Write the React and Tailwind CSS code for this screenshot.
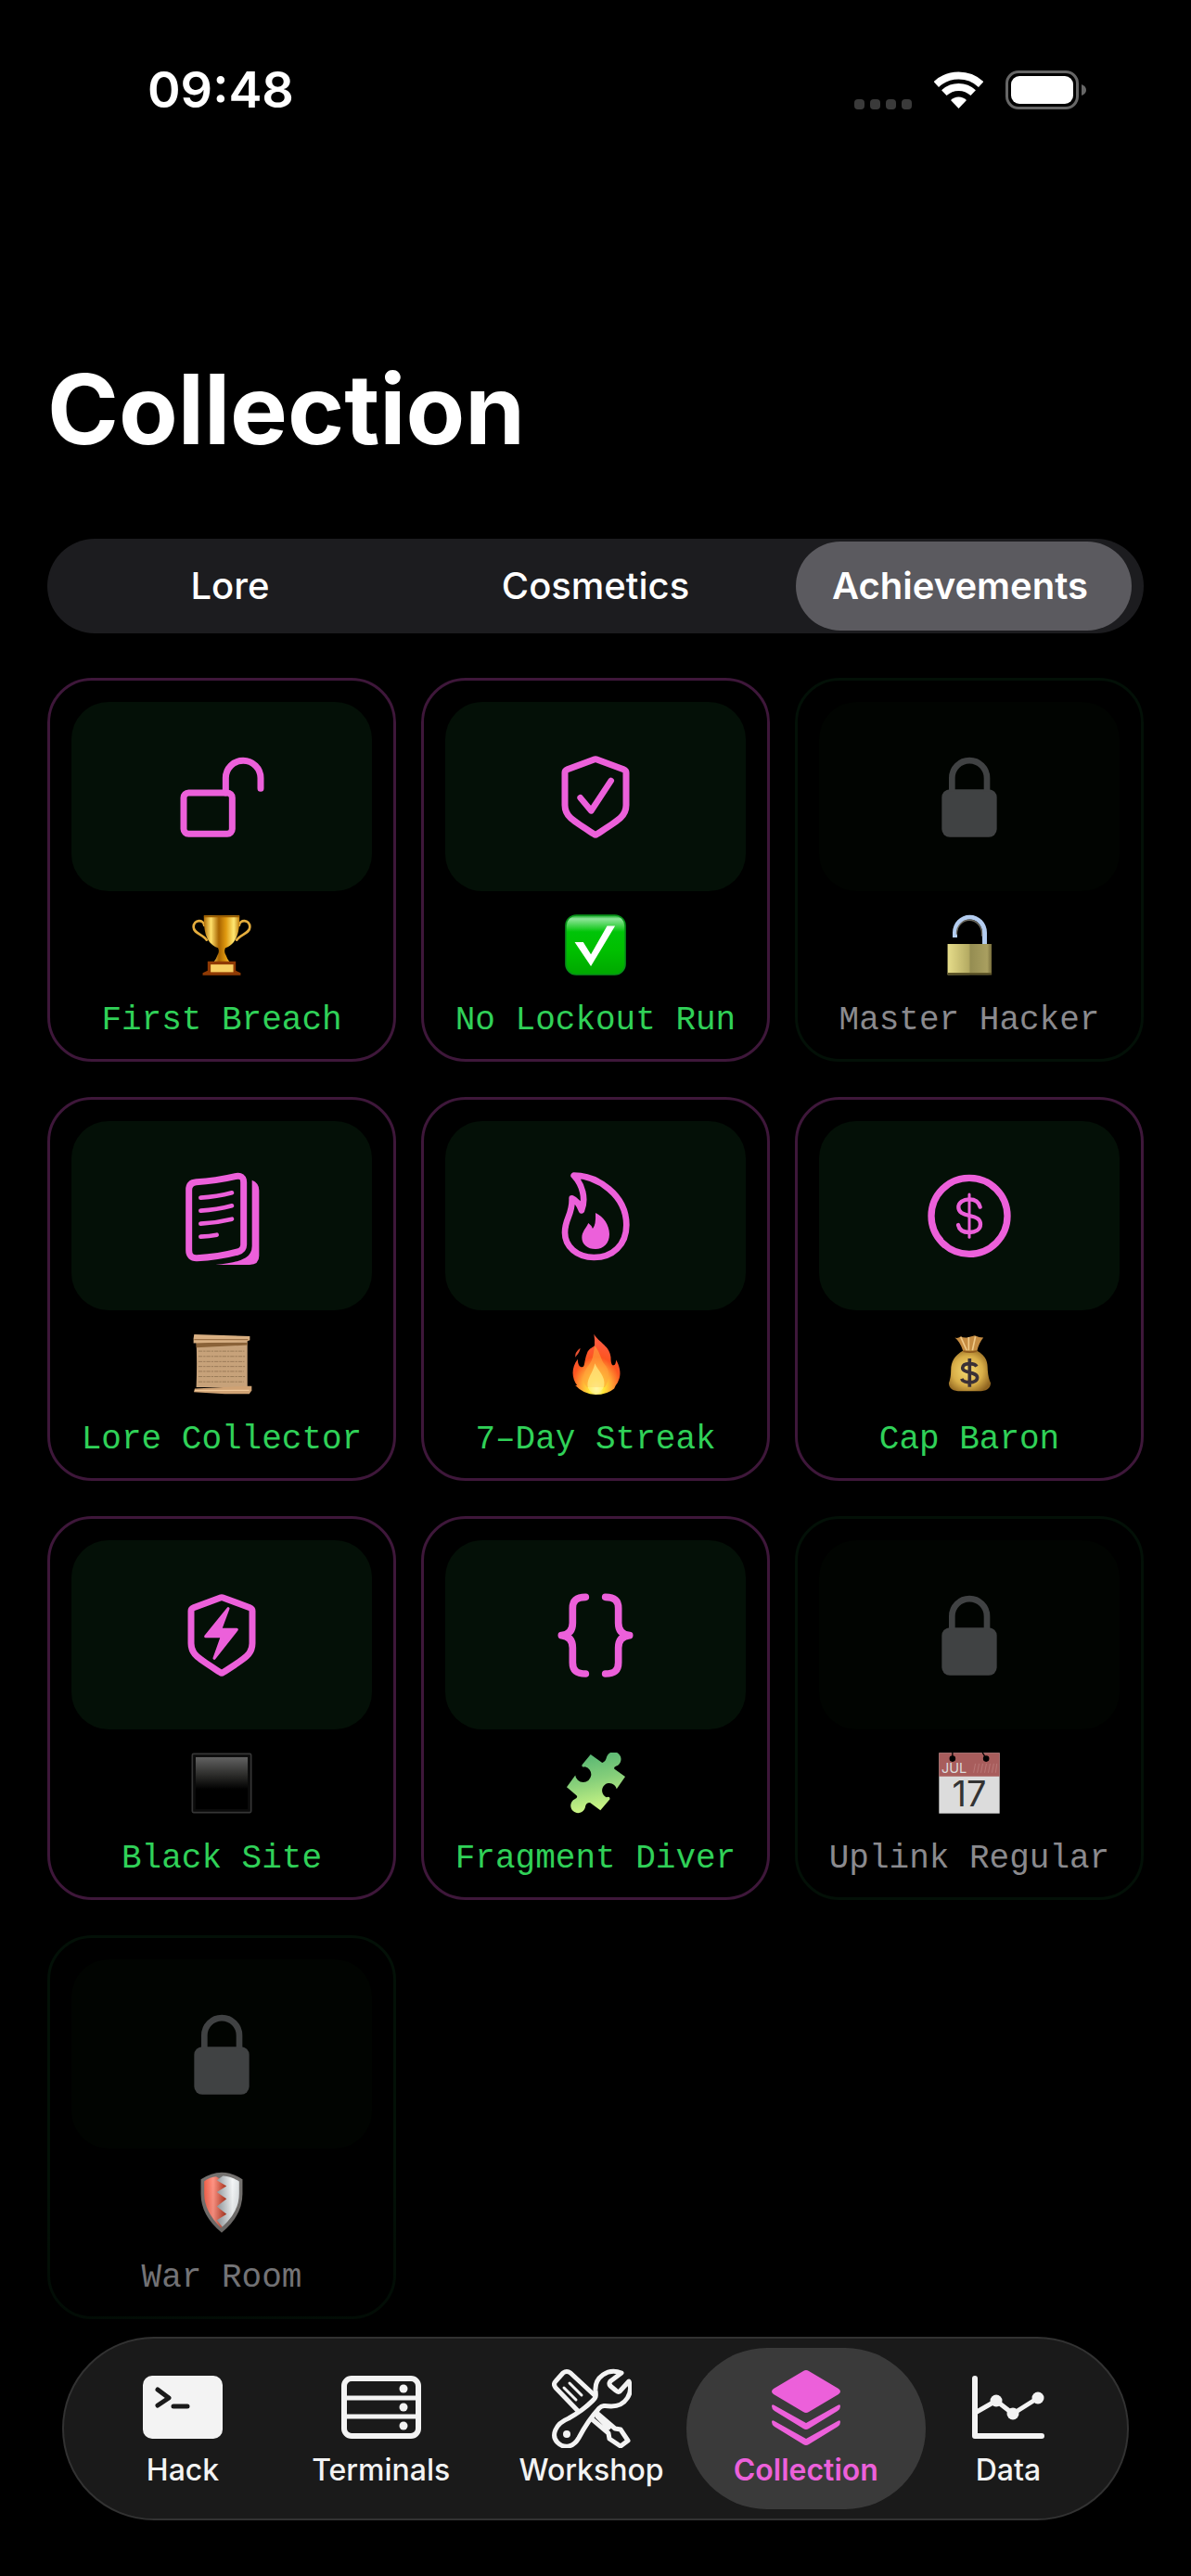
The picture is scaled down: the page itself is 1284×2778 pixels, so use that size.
const PINK_STROKE = { fill: "none", stroke: "currentColor", strokeLinecap: "round", strokeLinejoin: "round" };
const stroke = PINK_STROKE;

const SHIELD =
  "M146 30Q150 28 154 30L241 62Q249 65 249 73V178C249 214 226 226 154 272Q150 275 146 272C74 226 51 214 51 178V73Q51 65 59 62Z";

/* ---------- card icons (300 x 300 grid) ---------- */

const icons = {
  unlocked: (
    <g {...stroke} strokeWidth="21">
      <rect x="27" y="138" width="157" height="133" rx="16" />
      <path d="M163 138V90a56 56 0 0 1 113 0V124" />
    </g>
  ),
  shieldCheck: (
    <g {...stroke} strokeWidth="21">
      <path d={SHIELD} />
      <path d="M101 154L136 196L200 99" strokeWidth="20" />
    </g>
  ),
  locked: (
    <>
      <rect x="61" y="127" width="178" height="154" rx="26" fill="currentColor" />
      <path {...stroke} d="M94 134V90a56 56 0 0 1 113 0V134" strokeWidth="20" strokeLinecap="butt" />
    </>
  ),
  pages: (
    <>
      <path
        {...stroke}
        strokeWidth="21"
        d="M44 66Q44 43 68 41Q130 38 194 23Q221 17 221 42V244Q221 262 202 267Q140 284 70 287Q44 288 44 262Z"
      />
      <path
        {...stroke}
        strokeWidth="14"
        d="M82 92Q134 89 183 76M82 134Q134 131 183 118M82 176Q134 173 183 161M82 218Q110 217 134 212"
      />
      <path d="M248 35Q271 44 271 68V280Q271 309 240 309H130Q200 303 228 286Q248 272 248 248Z" fill="currentColor" />
    </>
  ),
  flame: (
    <>
      <path
        {...stroke}
        strokeWidth="20"
        d="M80 20C155 20 250 82 250 180C250 245 205 285 145 285C90 285 51 250 51 205C51 158 76 148 74 94Q94 102 105 133C120 95 108 50 80 20Z"
      />
      <path
        fill="currentColor"
        d="M150 141C175 152 195 180 195 210C195 240 175 258 150 258C124 258 106 242 106 221C106 203 118 192 127 174Q136 180 141 192Q152 180 150 141Z"
      />
    </>
  ),
  coin: (
    <g {...stroke} strokeWidth="13">
      <circle cx="150" cy="151" r="123" strokeWidth="22" />
      <path d="M185 122C181 106 168 97 150 97C130 97 115 107 115 123C115 140 130 145 150 150C172 155 186 160 186 178C186 195 170 204 150 204C130 204 117 195 114 180" />
      <path d="M150 81V220" strokeWidth="9" />
    </g>
  ),
  shieldBolt: (
    <g {...stroke} strokeWidth="21">
      <path d={SHIELD} />
      <path d="M171 65L146 133H199L126 226L151 155H98Z" strokeWidth="9" fill="currentColor" />
    </g>
  ),
  braces: (
    <g {...stroke} strokeWidth="23">
      <path d="M118 28C88 28 76 40 76 64V112C76 138 62 150 40 152C62 154 76 166 76 192V240C76 264 88 276 118 276" />
      <path d="M182 28C212 28 224 40 224 64V112C224 138 238 150 260 152C238 154 224 166 224 192V240C224 264 212 276 182 276" />
    </g>
  ),
};

/* ---------- emoji artwork (200 x 200 grid) ---------- */

const emojis = {
  trophy: (
    <>
      <defs>
        <linearGradient id="gold">
          <stop offset="0" stopColor="#b06c05" />
          <stop offset=".2" stopColor="#ffe06a" />
          <stop offset=".42" stopColor="#a86400" />
          <stop offset=".62" stopColor="#e09a10" />
          <stop offset=".84" stopColor="#ffe873" />
          <stop offset="1" stopColor="#c07c0a" />
        </linearGradient>
      </defs>
      <g fill="none" stroke="#e5ad3d" strokeWidth="8" strokeLinecap="round">
        <path d="M43 36C42 16 8 16 8 42C8 62 40 66 51 84" />
        <path d="M157 36C158 16 192 16 192 42C192 62 160 66 149 84" />
      </g>
      <path d="M42 4H158C160 64 146 98 112 110Q106 122 114 134Q118 146 126 156H74Q82 146 86 134Q94 122 88 110C54 98 40 64 42 4Z" fill="url(#gold)" />
      <path d="M42 4H158V10H42Z" fill="#9a5c00" />
      <path d="M54 154H146V184L162 192V199H38V192L54 184Z" fill="#8f3a04" />
      <rect x="64" y="164" width="74" height="25" fill="#f8cf63" />
    </>
  ),
  check: (
    <>
      <defs>
        <linearGradient id="glossGreen" x2="0" y2="1">
          <stop offset="0" stopColor="#0aa51c" />
          <stop offset=".06" stopColor="#8fe59a" />
          <stop offset=".28" stopColor="#00c408" />
          <stop offset=".6" stopColor="#00bf00" />
          <stop offset="1" stopColor="#00a800" />
        </linearGradient>
      </defs>
      <rect x="3" y="3" width="194" height="194" rx="34" fill="url(#glossGreen)" stroke="#08921a" strokeWidth="5" />
      <path d="M32 91H60L85 131L138 38H164L85 170Z" fill="#fff" />
    </>
  ),
  openLock: (
    <>
      <defs>
        <linearGradient id="brass">
          <stop offset="0" stopColor="#e6dd8a" />
          <stop offset=".48" stopColor="#b5ab63" />
          <stop offset=".52" stopColor="#958d52" />
          <stop offset=".9" stopColor="#a99f60" />
          <stop offset="1" stopColor="#756b3a" />
        </linearGradient>
      </defs>
      <path d="M53 76V60a48 50 0 0 1 97 0V98" fill="none" stroke="#b4cdf0" strokeWidth="15" />
      <path d="M59 66V62a41 43 0 0 1 82 0V72" fill="none" stroke="#6d6a60" strokeWidth="4" />
      <rect x="29" y="97" width="144" height="101" fill="url(#brass)" />
      <path d="M29 194H173" stroke="#5d5428" strokeWidth="6" />
    </>
  ),
  scroll: (
    <>
      <path d="M17 24H184V176H17Q20 96 17 24Z" fill="#c7a27a" />
      <path d="M17 30H184V38L17 46Z" fill="#8a6238" />
      <g stroke="#9a7a58" strokeWidth="3" strokeDasharray="13 3 7 3">
        <path d="M24 58H174M24 75H176M24 92H174M24 108H176M24 124H172M24 141H176M24 158H172" />
      </g>
      <path d="M10 3L192 9V22L182 26L8 32V16Z" fill="#d9b083" />
      <path d="M10 20L186 20" stroke="#9c7247" strokeWidth="4" />
      <path d="M12 180L182 172L198 172V186L190 198H110L9 192Z" fill="#cfa274" />
      <path d="M12 187L190 186" stroke="#f0c899" strokeWidth="4" />
    </>
  ),
  fire: (
    <>
      <defs>
        <radialGradient id="blaze" cx=".5" cy=".9" r=".75">
          <stop offset="0" stopColor="#fffbe0" />
          <stop offset=".2" stopColor="#ffe838" />
          <stop offset=".45" stopColor="#ffa235" />
          <stop offset=".7" stopColor="#fc5420" />
          <stop offset="1" stopColor="#ff5a3c" />
        </radialGradient>
      </defs>
      <path
        d="M95 2C112 30 148 42 150 78C150 92 152 104 158 104C164 104 167 96 167 86C178 104 184 128 178 146Q174 160 166 170L161 180Q138 200 100 200Q62 200 34 170L40 170C22 146 20 112 42 84C42 102 48 110 56 110C66 110 62 92 72 66C78 46 96 46 97 38Q98 20 95 2Z"
        fill="url(#blaze)"
      />
      <path d="M98 40C118 66 116 86 132 104C148 122 146 154 130 176H72C52 152 62 124 78 104C94 84 92 62 98 40Z" fill="#ffa53a" opacity=".6" />
      <path d="M98 98C108 122 134 140 128 172Q120 192 100 196Q76 192 74 170C74 142 92 130 98 98Z" fill="#fff28a" opacity=".65" />
      <path d="M50 48C50 60 40 70 34 78Q32 62 50 48Z" fill="#e85232" />
    </>
  ),
  moneyBag: (
    <>
      <defs>
        <radialGradient id="sack" cx=".45" cy=".5" r=".6">
          <stop offset="0" stopColor="#f6da70" />
          <stop offset=".6" stopColor="#d8ae48" />
          <stop offset="1" stopColor="#8f6420" />
        </radialGradient>
      </defs>
      <path d="M53 14Q62 18 72 10Q84 16 98 12L118 7Q132 14 146 14Q132 30 125 58H80Q70 28 53 14Z" fill="#c58c42" />
      <path d="M72 12L92 56M98 12V56M120 10L110 56" stroke="#f0c987" strokeWidth="5" />
      <path d="M80 56H124C158 74 160 96 160 120Q162 148 170 162Q168 189 130 189H72Q34 189 33 162Q40 146 40 120C40 92 52 72 80 56Z" fill="url(#sack)" />
      <path d="M80 58Q102 64 124 58" fill="none" stroke="#8f5a1e" strokeWidth="5" />
      <path
        d="M124 108C118 96 80 94 78 112C76 130 126 124 126 144C126 166 80 164 75 148M101 82V175"
        fill="none"
        stroke="#3a3036"
        strokeWidth="11"
      />
    </>
  ),
  blackSquare: (
    <>
      <defs>
        <linearGradient id="glossBlack" x2="0" y2="1">
          <stop offset="0" stopColor="#626262" />
          <stop offset=".35" stopColor="#2b2b29" />
          <stop offset=".62" stopColor="#000" />
        </linearGradient>
      </defs>
      <rect x="4" y="4" width="192" height="192" rx="4" fill="#0b0b0b" stroke="#363636" strokeWidth="5" />
      <rect x="15" y="15" width="170" height="170" fill="url(#glossBlack)" />
    </>
  ),
  puzzle: (
    <>
      <defs>
        <linearGradient id="jigsaw" x1=".4" x2=".6" y2="1">
          <stop offset="0" stopColor="#55b573" />
          <stop offset=".45" stopColor="#86cf7a" />
          <stop offset="1" stopColor="#d6fb86" />
        </linearGradient>
      </defs>
      <path
        d="M84 6L122 33Q134 28 136 16A24 24 0 1 1 168 44Q158 48 162 54L197 79L169 119A24 24 0 1 0 136 146Q148 142 147 152L116 189L82 164Q68 164 66 180A24 24 0 1 1 32 152Q44 148 38 140L6 113L34 74A26 26 0 1 0 66 46Q54 50 56 40Z"
        fill="url(#jigsaw)"
      />
    </>
  ),
  calendar: (
    <>
      <rect x="1" y="1" width="198" height="198" fill="#dcdcdc" />
      <rect x="1" y="1" width="198" height="77" fill="#a85d5c" />
      <g fill="#000" stroke="#000" strokeWidth="4">
        <circle cx="45" cy="20" r="8" />
        <circle cx="155" cy="20" r="8" />
        <path d="M45 0V20M143 0L155 20" />
      </g>
      <path d="M114 66L120 36M126 66L132 36M138 66L144 36M150 66L156 36M162 66L168 36M174 66L180 36M186 66L190 36" stroke="#b97675" strokeWidth="3" />
      <text x="9" y="68" fontSize="44" fill="#dcdcdc" fontFamily="Inter, sans-serif">JUL</text>
      <text x="100" y="177" fontSize="115" fill="#333" textAnchor="middle" fontFamily="Inter, sans-serif">17</text>
    </>
  ),
  shield: (
    <>
      <defs>
        <linearGradient id="redHalf">
          <stop offset="0" stopColor="#f2604a" />
          <stop offset=".4" stopColor="#ff9383" />
          <stop offset="1" stopColor="#a8321d" />
        </linearGradient>
        <linearGradient id="whiteHalf">
          <stop offset="0" stopColor="#949ba0" />
          <stop offset=".7" stopColor="#f4f6f7" />
          <stop offset="1" stopColor="#dde1e3" />
        </linearGradient>
      </defs>
      <path d="M32 25Q66 2 100 2Q134 2 168 25V72Q168 144 100 199Q32 144 32 72Z" fill="#74716f" />
      <path d="M82 16L116 38V160L98 184Q43 130 43 72V31Q62 18 82 16Z" fill="url(#redHalf)" />
      <path d="M104 14Q134 16 157 32V72Q157 132 102 180L84 158L116 139L84 114L116 89L84 67L116 47L84 28Z" fill="url(#whiteHalf)" />
    </>
  ),
};

const achievements = [
  { name: "First Breach", icon: "unlocked", emoji: "trophy", unlocked: true },
  { name: "No Lockout Run", icon: "shieldCheck", emoji: "check", unlocked: true },
  { name: "Master Hacker", icon: "locked", emoji: "openLock", unlocked: false },
  { name: "Lore Collector", icon: "pages", emoji: "scroll", unlocked: true },
  { name: "7–Day Streak", icon: "flame", emoji: "fire", unlocked: true },
  { name: "Cap Baron", icon: "coin", emoji: "moneyBag", unlocked: true },
  { name: "Black Site", icon: "shieldBolt", emoji: "blackSquare", unlocked: true },
  { name: "Fragment Diver", icon: "braces", emoji: "puzzle", unlocked: true },
  { name: "Uplink Regular", icon: "locked", emoji: "calendar", unlocked: false },
  { name: "War Room", icon: "locked", emoji: "shield", unlocked: false },
];

/* ---------- tab bar icons (86 x 86 grid) ---------- */

const tabs = [
  {
    label: "Hack",
    icon: (
      <>
        <rect y="8" width="86" height="68" rx="10" fill="currentColor" />
        <path d="M16 23L28 32L16 40M33 41H48" fill="none" stroke="#1a1a1a" strokeWidth="5" strokeLinecap="round" strokeLinejoin="round" />
      </>
    ),
  },
  {
    label: "Terminals",
    icon: (
      <>
        <rect {...stroke} x="3" y="11" width="80" height="62" rx="8" strokeWidth="6" />
        <path {...stroke} d="M4 32H82M4 52H82" strokeWidth="5" />
        <g fill="currentColor">
          <circle cx="67" cy="22" r="4.5" />
          <circle cx="67" cy="42" r="4.5" />
          <circle cx="67" cy="62" r="4.5" />
        </g>
      </>
    ),
  },
  {
    label: "Workshop",
    icon: (
      <g {...stroke} strokeWidth="5">
        <path d="M12 5Q16 2 20 5L48 31L30 48L4 21Q1 17 4 14Z" />
        <path d="M13 21L26 34M19 16L32 29" strokeWidth="3" />
        <path d="M47 47L68 65L74 66L82 78L74 84L62 76L61 70L41 53M49 52L61 64" />
        <path
          d="M75 5C60 -1 46 10 47 24C48 31 47 32 44 35Q34 45 18 54C3 60 -1 73 6 80C14 88 24 84 29 75Q39 56 51 43C54 40 57 40 64 41C80 41 88 26 83 14L73 25Q71 26 69 24L63 19Q61 17 63 14Z"
          fill="#1a1a1a"
        />
        <circle cx="16" cy="71" r="4" fill="currentColor" stroke="none" />
      </g>
    ),
  },
  {
    label: "Collection",
    active: true,
    icon: (
      <g fill="currentColor">
        <path d="M40 3Q43 1 46 3L78 22Q82 25 78 28L46 47Q43 49 40 47L8 28Q4 25 8 22Z" />
        <path d="M6 41Q6 38 9 40L43 59L77 40Q80 38 80 41Q80 44 77 46L46 65Q43 67 40 65L9 46Q6 44 6 41Z" />
        <path d="M6 58Q6 55 9 57L43 76L77 57Q80 55 80 58Q80 61 77 63L46 82Q43 84 40 82L9 63Q6 61 6 58Z" />
      </g>
    ),
  },
  {
    label: "Data",
    icon: (
      <>
        <path {...stroke} d="M7 11V73H79" strokeWidth="6" />
        <path {...stroke} d="M9 47L30 35L48 49L75 32" strokeWidth="5" />
        <g fill="currentColor">
          <circle cx="30" cy="35" r="6.5" />
          <circle cx="48" cy="49" r="6.5" />
          <circle cx="75" cy="32" r="6.5" />
        </g>
      </>
    ),
  },
];

function StatusBar() {
  return (
    <div className="flex items-center justify-between pt-[65px] pr-[113px] pl-[159px]">
      <span className="text-[54px] leading-[64px] font-semibold">09:48</span>
      <div className="flex items-center gap-6">
        <div className="flex gap-[6px] pt-[30px]">
          <span className="size-[11px] rounded-[4px] bg-[#3a3a3a]" />
          <span className="size-[11px] rounded-[4px] bg-[#3a3a3a]" />
          <span className="size-[11px] rounded-[4px] bg-[#3a3a3a]" />
          <span className="size-[11px] rounded-[4px] bg-[#3a3a3a]" />
        </div>
        <svg className="h-[40px] w-[53px]" viewBox="0 0 53 40" aria-hidden="true">
          <g fill="none" stroke="#fff" strokeWidth="8">
            <path d="M2.3 14A35.5 35.5 0 0 1 50.7 14" />
            <path d="M10.8 23.2A23 23 0 0 1 42.2 23.2" />
          </g>
          <path d="M26.5 40L18 31A12 12 0 0 1 35 31Z" fill="#fff" />
        </svg>
        <svg className="h-[42px] w-[87px]" viewBox="0 0 87 42" aria-hidden="true">
          <rect x="1.5" y="1.5" width="76" height="39" rx="12.5" fill="none" stroke="#666" strokeWidth="3" />
          <rect x="6" y="6" width="67" height="30" rx="9" fill="#fff" />
          <path d="M82 15Q87 17 87 21T82 27Z" fill="#666" />
        </svg>
      </div>
    </div>
  );
}

function AchievementCard({ name, icon, emoji, unlocked }) {
  return (
    <article
      className={`flex flex-col items-center rounded-[48px] border-3 px-[23px] pt-[23px] pb-[17px] ${
        unlocked ? "border-[#3e173a] text-[#30d158]" : "border-[#031007] text-[#8a8a8e]"
      }`}
    >
      <div
        className={`flex h-[204px] w-full items-center justify-center rounded-[40px] ${
          unlocked ? "bg-[#041007] text-[#ec60da]" : "bg-[#010401] text-[#404243]"
        }`}
      >
        <svg className="size-[100px] overflow-visible" viewBox="0 0 300 300" aria-hidden="true">
          {icons[icon]}
        </svg>
      </div>
      <svg className="mt-[25px] size-[66px]" viewBox="0 0 200 200" aria-hidden="true">
        {emojis[emoji]}
      </svg>
      <h2 className="mt-[25px] font-['Liberation_Mono',monospace] text-[36px] leading-[48px] whitespace-nowrap">{name}</h2>
    </article>
  );
}

function TabBar() {
  return (
    <footer className="pointer-events-none sticky bottom-0 -mt-[150px] bg-linear-to-t from-black/70 to-transparent px-[67px] pt-[169px] pb-[60px]">
      <nav className="pointer-events-auto flex justify-between rounded-full border-2 border-[#323232] bg-[#1a1a1a] px-[27px] py-[10px]">
        {tabs.map((tab) => (
          <button
            key={tab.label}
            type="button"
            className={`flex min-w-[202px] flex-col items-center gap-[6px] rounded-full pt-[22px] pb-6 text-[32px] leading-9 ${
              tab.active ? "-mx-[14px] bg-[#3a3a3a] px-[51px] font-semibold text-[#ec60da]" : "px-[36px] font-medium text-[#f3f3f3]"
            }`}
          >
            <svg className="size-[86px]" viewBox="0 0 86 86" aria-hidden="true">
              {tab.icon}
            </svg>
            {tab.label}
          </button>
        ))}
      </nav>
    </footer>
  );
}

export default function App() {
  return (
    <div className="flex min-h-screen flex-col bg-black font-['Inter',sans-serif] text-white">
      <StatusBar />
      <main className="flex-1 px-[51px] pt-[252px]">
        <h1 className="text-[104px] leading-[120px] font-bold">Collection</h1>
        <div className="mt-20 grid h-[102px] grid-cols-3 rounded-full bg-[#1c1c1f] py-[3px] text-[40px] font-medium">
          <button type="button">Lore</button>
          <button type="button">Cosmetics</button>
          <button type="button" className="mr-[13px] ml-[19px] rounded-full bg-[#5b5a5f] pr-2 font-semibold">
            Achievements
          </button>
        </div>
        <section className="mt-12 grid grid-cols-3 gap-x-[27px] gap-y-[38px]">
          {achievements.map((item) => (
            <AchievementCard key={item.name} {...item} />
          ))}
        </section>
      </main>
      <TabBar />
    </div>
  );
}
